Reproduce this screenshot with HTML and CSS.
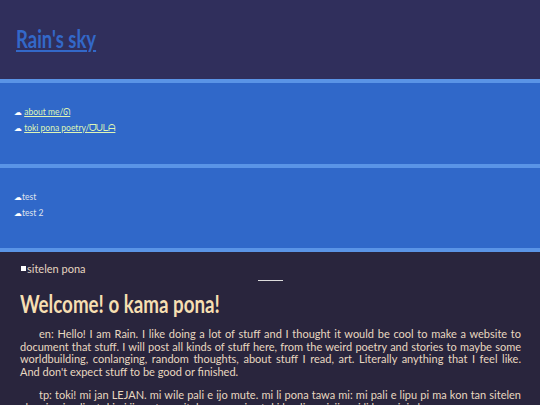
FILE: index.html
```html
<!DOCTYPE html>
<html lang="en">
<head>
<meta charset="utf-8">
<title>Rain's sky</title>
<link rel="stylesheet" href="styles.css">
</head>
<body>
<header class="site-header"><h1 class="site-title"><a href="#">Rain's sky</a></h1></header>
<nav class="panel">
  <ul class="menu">
    <li><span class="cloud">☁</span> <a href="#">about me/ᘏ</a></li>
    <li><span class="cloud">☁</span> <a href="#">toki pona poetry/ᗜᑌᒪᗩ</a></li>
  </ul>
</nav>
<nav class="panel panel-last">
  <ul class="menu">
    <li><span class="cloud">☁</span>test</li>
    <li><span class="cloud">☁</span>test 2</li>
  </ul>
</nav>
<main class="content">
  <div class="toggle"><span class="square"></span>sitelen pona</div>
  <hr class="rule">
  <h2 class="heading">Welcome! o kama pona!</h2>
  <p>en: Hello! I am Rain. I like doing a lot of stuff and I thought it would be cool to make a website to document that stuff. I will post all kinds of stuff here, from the weird poetry and stories to maybe some worldbuilding, conlanging, random thoughts, about stuff I read, art. Literally anything that I feel like. <span class="keep">And don't expect</span> stuff to be good or finished.</p>
  <p>tp: toki! mi jan LEJAN. mi wile pali e ijo mute. mi li pona tawa mi: mi pali e lipu pi ma kon tan sitelen ale mi. mi pali e toki pi ijo ante, e sitelen, e musi, e toki lon lipu ni. ijo mi li ken pini ala.</p>
</main>
</body>
</html>
```
FILE: styles.css
```css
html, body { margin: 0; padding: 0; }
body {
  background: #29253d;
  color: #e8d8c0;
  font-family: "Lato", "Noto Sans", sans-serif;
  font-size: 12px;
}
.site-header { height: 79px; background: #302f5c; padding: 26px 16px 0; box-sizing: border-box; }
.site-title { display: inline-block; margin: 0; font-size: 25px; line-height: 25px; font-weight: 700; transform: scaleX(0.74); transform-origin: left center; }
.site-title a { color: #3368c8; }
.panel {
  height: 85px;
  box-sizing: border-box;
  background: #3068c9;
  border-top: 4px solid #5a94e6;
  padding: 22px 14px 0;
}
.panel-last { height: 88px; border-bottom: 4px solid #5a94e6; }
.menu { list-style: none; margin: 0; padding: 0; font-size: 8.5px; line-height: 14.5px; }
.menu li { color: #dfe3ee; }
.menu a { color: #dff5b5; text-decoration: underline; }
.cloud { color: #fff; font-family: "DejaVu Sans", sans-serif; font-size: 8px; }
.content { padding: 10px 19px 0 20px; }
.toggle { padding-left: 1px; font-size: 11px; line-height: 13px; color: #e6d6c0; display: flex; align-items: center; }
.square { width: 5px; height: 5px; background: #fff; margin-right: 1px; }
.rule { width: 25px; height: 1px; margin: 5px auto 0; padding: 0; border: 0; background: #ddd; }
.heading { display: inline-block; margin: 8px 0 11px; font-size: 25px; line-height: 28px; font-weight: 700; color: #f6dfb2; transform: scaleX(0.75); transform-origin: left center; white-space: nowrap; }
p { margin: 0 0 10px; font-size: 11px; line-height: 12.7px; text-align: justify; text-indent: 19px; }
.keep { white-space: nowrap; }
```
